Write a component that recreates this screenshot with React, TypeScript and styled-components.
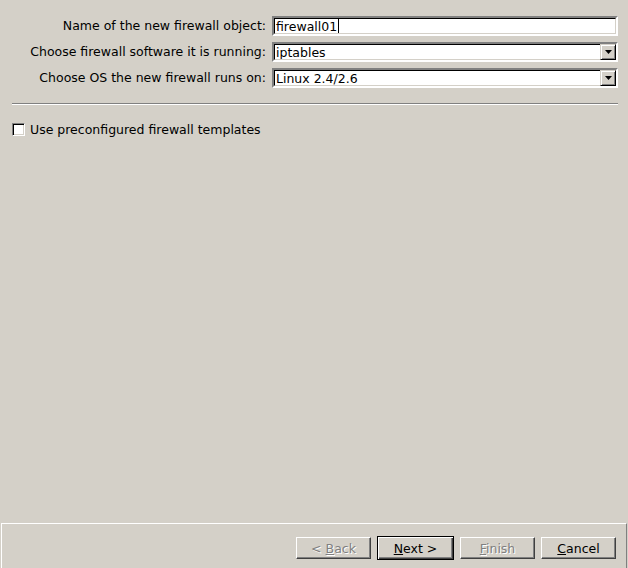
import React from "react";
import styled, { createGlobalStyle } from "styled-components";

const Global = createGlobalStyle`
  html, body { margin: 0; padding: 0; }
  body {
    width: 628px;
    height: 568px;
    overflow: hidden;
    background: #d4d0c8;
    font-family: "DejaVu Sans", "Liberation Sans", sans-serif;
    font-size: 12.5px;
    color: #000;
  }
`;

const Window = styled.div`
  width: 628px;
  height: 568px;
  display: flex;
  flex-direction: column;
  background: #d4d0c8;
  box-sizing: border-box;
`;

const Content = styled.div`
  flex: 1;
  display: flex;
  flex-direction: column;
  padding: 16px 10px 0 12px;
`;

const Form = styled.div`
  display: grid;
  grid-template-columns: 254px 1fr;
  column-gap: 6px;
  row-gap: 6px;
  align-items: center;
`;

const Label = styled.label`
  text-align: right;
  white-space: nowrap;
  line-height: 20px;
`;

const Field = styled.div`
  height: 20px;
  box-sizing: border-box;
  background: #fff;
  border-style: solid;
  border-width: 2px;
  border-color: #808080 #ffffff #ffffff #808080;
  position: relative;
  display: flex;
  align-items: center;
  &::before {
    content: "";
    position: absolute;
    inset: 0;
    border-style: solid;
    border-width: 1px;
    border-color: #000 #d4d0c8 #d4d0c8 #000;
    pointer-events: none;
  }
`;

const FieldText = styled.span`
  padding-left: 2px;
  flex: 1;
  white-space: nowrap;
  display: flex;
  align-items: center;
`;

const Caret = styled.span`
  display: inline-block;
  width: 1px;
  height: 14px;
  background: #000;
  margin-left: 1px;
`;

const ArrowButton = styled.div`
  width: 16px;
  height: 16px;
  box-sizing: border-box;
  background: #d4d0c8;
  border-style: solid;
  border-width: 1px;
  border-color: #d4d0c8 #000 #000 #d4d0c8;
  box-shadow: inset 1px 1px 0 #fff, inset -1px -1px 0 #808080;
  display: flex;
  align-items: center;
  justify-content: center;
  position: relative;
  z-index: 1;
`;

const Separator = styled.div`
  margin-top: 15px;
  height: 1px;
  background: #808080;
  border-bottom: 1px solid #fff;
`;

const CheckRow = styled.div`
  display: flex;
  align-items: center;
  margin-top: 17px;
  gap: 5px;
`;

const CheckBox = styled.span`
  width: 13px;
  height: 13px;
  box-sizing: border-box;
  background: #fff;
  border-style: solid;
  border-width: 1px;
  border-color: #808080 #fff #fff #808080;
  box-shadow: inset 1px 1px 0 #000, inset -1px -1px 0 #d4d0c8;
`;

const Footer = styled.div`
  height: 45px;
  box-sizing: border-box;
  margin: 0 1px 0 1px;
  border-top: 1px solid #fff;
  border-left: 1px solid #fff;
  border-right: 1px solid #808080;
  display: flex;
  justify-content: flex-end;
  align-items: flex-start;
  padding: 13px 10px 0 0;
  gap: 6px;
`;

const Button = styled.button<{ $default?: boolean }>`
  width: ${(p) => (p.$default ? "77px" : "75px")};
  height: ${(p) => (p.$default ? "24px" : "22px")};
  margin-top: ${(p) => (p.$default ? "-1px" : "0")};
  box-sizing: border-box;
  padding: 0;
  background: #d4d0c8;
  font-family: "DejaVu Sans", "Liberation Sans", sans-serif;
  font-size: 12.5px;
  color: #000;
  border-style: solid;
  border-width: 1px;
  border-color: ${(p) =>
    p.$default ? "#000" : "#fff #404040 #404040 #fff"};
  box-shadow: ${(p) =>
    p.$default
      ? "inset 1px 1px 0 #fff, inset -1px -1px 0 #404040, inset -2px -2px 0 #808080"
      : "inset -1px -1px 0 #808080"};
  &:disabled {
    color: #808080;
    text-shadow: 1px 1px 0 #fff;
  }
`;

const Key = styled.u`
  text-decoration: underline;
`;

const ArrowIcon = () => (
  <svg width="7" height="4" viewBox="0 0 7 4">
    <path d="M0 0h7L3.5 4z" fill="#000" />
  </svg>
);

export default function App() {
  return (
    <Window>
      <Global />
      <Content>
        <Form>
          <Label>Name of the new firewall object:</Label>
          <Field>
            <FieldText>
              firewall01
              <Caret />
            </FieldText>
          </Field>
          <Label>Choose firewall software it is running:</Label>
          <Field>
            <FieldText>iptables</FieldText>
            <ArrowButton>
              <ArrowIcon />
            </ArrowButton>
          </Field>
          <Label>Choose OS the new firewall runs on:</Label>
          <Field>
            <FieldText>Linux 2.4/2.6</FieldText>
            <ArrowButton>
              <ArrowIcon />
            </ArrowButton>
          </Field>
        </Form>
        <Separator />
        <CheckRow>
          <CheckBox />
          <span>Use preconfigured firewall templates</span>
        </CheckRow>
      </Content>
      <Footer>
        <Button disabled>
          &lt; <Key>B</Key>ack
        </Button>
        <Button $default>
          <Key>N</Key>ext &gt;
        </Button>
        <Button disabled>
          <Key>F</Key>inish
        </Button>
        <Button>
          <Key>C</Key>ancel
        </Button>
      </Footer>
    </Window>
  );
}
